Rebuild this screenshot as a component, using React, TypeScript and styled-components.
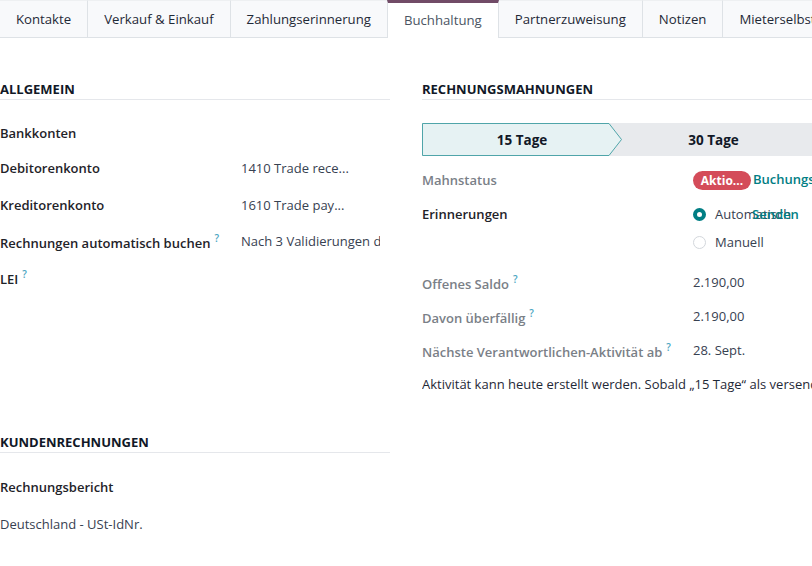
import styled, { createGlobalStyle } from "styled-components";

const GlobalStyle = createGlobalStyle`
  html, body {
    margin: 0;
    padding: 0;
    background: #fff;
    overflow: hidden;
  }
  body {
    font-family: "Open Sans", "Noto Sans", sans-serif;
    font-size: 13px;
    color: #374151;
  }
`;

const Tabs = styled.ul`
  display: flex;
  margin: 0;
  padding: 0;
  list-style: none;
  height: 38px;
  box-sizing: border-box;
  border-bottom: 1px solid #dee2e6;
  white-space: nowrap;
`;

const Tab = styled.li<{ $active?: boolean }>`
  flex-shrink: 0;
  box-sizing: border-box;
  height: ${({ $active }) => ($active ? "38px" : "37px")};
  padding: 0 16px;
  line-height: ${({ $active }) => ($active ? "35px" : "37px")};
  font-size: 13.2px;
  color: ${({ $active }) => ($active ? "#4b5563" : "#1f2937")};
  background: ${({ $active }) => ($active ? "#fff" : "#f8f9fb")};
  border-right: 1px solid #dee2e6;
  border-left: ${({ $active }) => ($active ? "1px solid #dee2e6" : "none")};
  border-top: ${({ $active }) => ($active ? "3px solid #714b67" : "1px solid #eef0f2")};
  margin-left: ${({ $active }) => ($active ? "-1px" : "0")};
`;

const Sheet = styled.div`
  display: grid;
  grid-template-columns: 390px 390px;
  column-gap: 32px;
  padding-top: 42px;
`;

const Column = styled.div<{ $top?: number }>`
  min-width: 0;
  overflow: hidden;
  margin-top: ${({ $top }) => $top ?? 0}px;
`;

const GroupTitle = styled.div`
  font-size: 13px;
  font-weight: 700;
  line-height: 18px;
  color: #111827;
  text-transform: uppercase;
  padding-bottom: 1px;
  border-bottom: 1px solid #e5e7eb;
  margin-bottom: 16px;
  white-space: nowrap;
`;

const Row = styled.div<{ $label: number; $h?: number }>`
  display: grid;
  grid-template-columns: ${({ $label }) => $label}px 1fr;
  align-items: center;
  min-height: ${({ $h }) => $h ?? 36}px;
  white-space: nowrap;
`;

const Label = styled.div<{ $muted?: boolean }>`
  font-weight: 600;
  color: ${({ $muted }) => ($muted ? "#7a8087" : "#1f2329")};
`;

const Value = styled.div<{ $clip?: number }>`
  position: relative;
  color: #374151;
  overflow: hidden;
  max-width: ${({ $clip }) => ($clip ? `${$clip}px` : "none")};
`;

const Help = styled.sup`
  color: #4aa6c2;
  font-size: 10px;
  font-weight: 600;
  margin-left: 4px;
  vertical-align: 6px;
`;

const StatusBar = styled.div`
  display: flex;
  height: 33px;
  background: #e8eaed;
  margin-top: 23px;
  margin-bottom: 7px;
`;

const Step = styled.div<{ $w: number; $ml?: number }>`
  position: relative;
  flex-shrink: 0;
  width: ${({ $w }) => $w}px;
  margin-left: ${({ $ml }) => $ml ?? 0}px;
  display: flex;
  align-items: center;
  justify-content: center;
  font-weight: 700;
  font-size: 13.5px;
  color: #111827;
`;

const StepText = styled.span`
  position: relative;
  z-index: 1;
`;

const StepShape = styled.svg`
  position: absolute;
  inset: 0;
  width: 100%;
  height: 100%;
`;

const Badge = styled.span`
  display: inline-flex;
  align-items: center;
  justify-content: center;
  width: 58px;
  height: 19px;
  border-radius: 10px;
  background: #d44c59;
  color: #fff;
  font-size: 12px;
  font-weight: 700;
  vertical-align: middle;
`;

const LinkText = styled.span<{ $over?: boolean }>`
  color: #017e84;
  font-weight: 600;
  margin-left: 2px;
  ${({ $over }) => ($over ? "position: absolute; left: 59px; top: 50%; transform: translateY(-50%); margin: 0;" : "")}
`;

const RadioList = styled.div`
  display: flex;
  flex-direction: column;
  padding: 3px 0;
`;

const RadioItem = styled.div`
  position: relative;
  display: flex;
  align-items: center;
  gap: 9px;
  height: 28px;
  color: #374151;
`;

const RadioDot = styled.span<{ $on?: boolean }>`
  width: 13px;
  height: 13px;
  box-sizing: border-box;
  border-radius: 50%;
  background: #fff;
  border: ${({ $on }) => ($on ? "4px solid #017e84" : "1px solid #d3d7dc")};
`;

const Note = styled.div`
  line-height: 34px;
  white-space: nowrap;
  color: #1f2937;
`;

export default function App() {
  const tabs = [
    "Kontakte",
    "Verkauf & Einkauf",
    "Zahlungserinnerung",
    "Buchhaltung",
    "Partnerzuweisung",
    "Notizen",
    "Mieterselbstauskunft",
  ];
  return (
    <>
      <GlobalStyle />
      <Tabs>
        {tabs.map((t) => (
          <Tab key={t} $active={t === "Buchhaltung"}>
            {t}
          </Tab>
        ))}
      </Tabs>
      <Sheet>
        <Column>
          <GroupTitle>Allgemein</GroupTitle>
          <Row $label={241} $h={34}>
            <Label>Bankkonten</Label>
            <Value />
          </Row>
          <Row $label={241}>
            <Label>Debitorenkonto</Label>
            <Value>1410 Trade rece...</Value>
          </Row>
          <Row $label={241} $h={37}>
            <Label>Kreditorenkonto</Label>
            <Value>1610 Trade pay...</Value>
          </Row>
          <Row $label={241}>
            <Label>
              Rechnungen automatisch buchen<Help>?</Help>
            </Label>
            <Value $clip={139}>Nach 3 Validierungen der Rechnung</Value>
          </Row>
          <Row $label={241}>
            <Label>
              LEI<Help>?</Help>
            </Label>
            <Value />
          </Row>
        </Column>
        <Column>
          <GroupTitle>Rechnungsmahnungen</GroupTitle>
          <StatusBar>
            <Step $w={200}>
              <StepShape viewBox="0 0 200 33" preserveAspectRatio="none">
                <polygon
                  points="0.5,0.5 187,0.5 199.5,16.5 187,32.5 0.5,32.5"
                  fill="#e6f2f3"
                  stroke="#4fa5a9"
                  strokeWidth="1"
                />
              </StepShape>
              <StepText>15 Tage</StepText>
            </Step>
            <Step $w={207} $ml={-12}>
              <StepText>30 Tage</StepText>
            </Step>
          </StatusBar>
          <Row $label={271} $h={34}>
            <Label $muted>Mahnstatus</Label>
            <Value>
              <Badge>Aktio...</Badge>
              <LinkText>Buchungsstatus</LinkText>
            </Value>
          </Row>
          <Row $label={271} $h={62}>
            <Label style={{ alignSelf: "start", marginTop: 8 }}>Erinnerungen</Label>
            <RadioList>
              <RadioItem>
                <RadioDot $on />
                Automatisch
                <LinkText $over>Senden</LinkText>
              </RadioItem>
              <RadioItem>
                <RadioDot />
                Manuell
              </RadioItem>
            </RadioList>
          </Row>
          <Row $label={271} $h={34} style={{ marginTop: 6 }}>
            <Label $muted>
              Offenes Saldo<Help>?</Help>
            </Label>
            <Value>2.190,00</Value>
          </Row>
          <Row $label={271} $h={34}>
            <Label $muted>
              Davon überfällig<Help>?</Help>
            </Label>
            <Value>2.190,00</Value>
          </Row>
          <Row $label={271} $h={34}>
            <Label $muted>
              Nächste Verantwortlichen-Aktivität ab<Help>?</Help>
            </Label>
            <Value>28. Sept.</Value>
          </Row>
          <Note>
            Aktivität kann heute erstellt werden. Sobald „15 Tage“ als versendet markiert wurde.
          </Note>
        </Column>
        <Column $top={32}>
          <GroupTitle>Kundenrechnungen</GroupTitle>
          <Row $label={241}>
            <Label>Rechnungsbericht</Label>
            <Value />
          </Row>
          <Row $label={241} $h={38}>
            <Value>Deutschland - USt-IdNr.</Value>
          </Row>
        </Column>
      </Sheet>
    </>
  );
}
